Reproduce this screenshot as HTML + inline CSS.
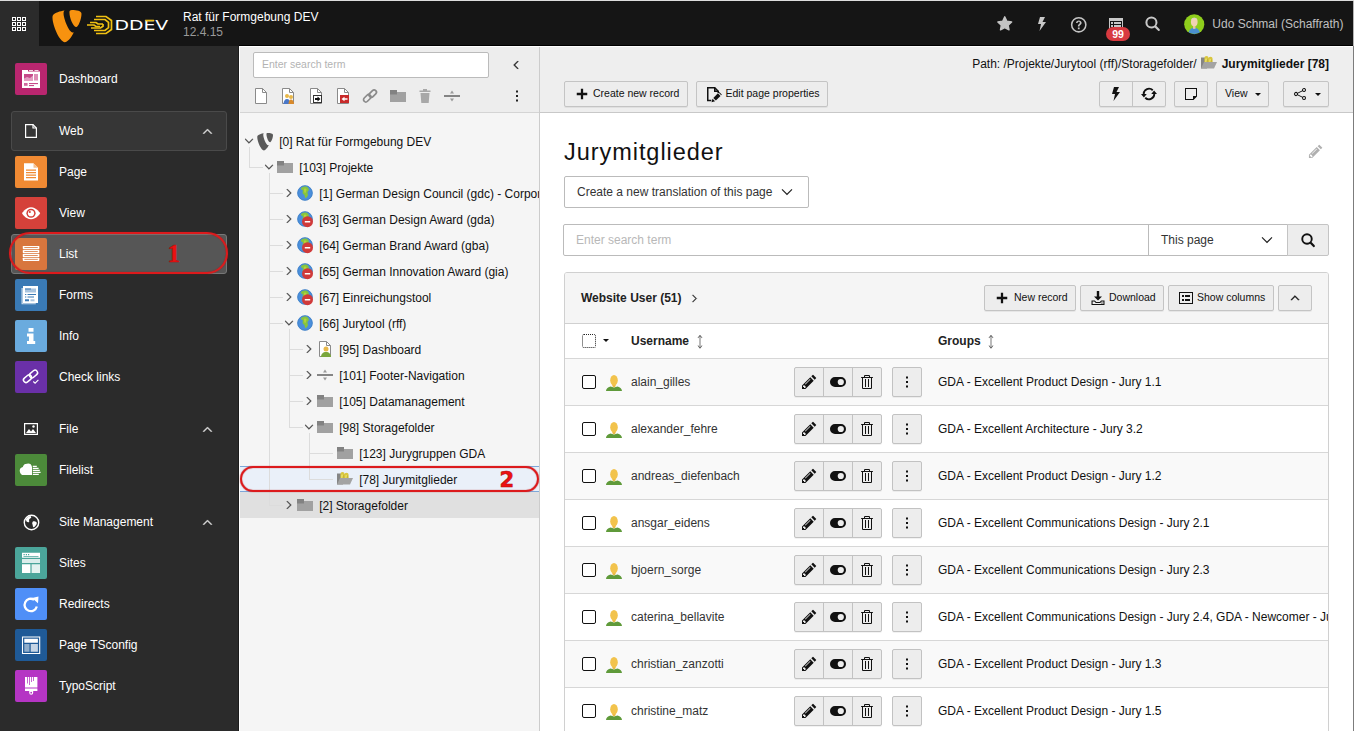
<!DOCTYPE html>
<html lang="en"><head><meta charset="utf-8"><title>List · Jurymitglieder</title>
<style>
*{box-sizing:border-box;margin:0;padding:0}
html,body{width:1354px;height:731px;overflow:hidden;background:#fff}
body{font-family:"Liberation Sans",Arial,sans-serif;font-size:12px;color:#1a1a1a;position:relative}
.abs{position:absolute}
svg{display:block;overflow:visible}
#topline{left:0;top:0;width:1354px;height:1px;background:#dcdcdc}
#topbar{left:0;top:1px;width:1353px;height:45px;background:#151515;color:#fff}
#blackline{left:239px;top:45px;width:1114px;height:1px;background:#000;z-index:5}
#gridbtn{left:0;top:0;width:39px;height:45px;background:#2b2b2b}
#rightline{left:1353px;top:1px;width:1px;height:730px;background:linear-gradient(#b4b4b4 0,#b4b4b4 45px,#7c7c7c 45px)}
#side{left:0;top:46px;width:239px;height:685px;background:#2b2b2b;color:#fff}
.modic{position:absolute;left:15px;width:32px;height:32px;border-radius:2px;overflow:hidden}
.mlabel{position:absolute;left:59px;font-size:12px;line-height:16px;color:#fff;white-space:nowrap}
.ghead{position:absolute;left:11px;width:216px;height:40px;border-radius:3px}
.ghead .gi{position:absolute;left:12px;top:12px;color:#fff}
.ghead .gc{position:absolute;left:188px;top:12px;color:#ddd}
#treeline{left:238px;top:46px;width:1px;height:685px;background:#1c1c1c}
#whiteline{left:239px;top:46px;width:1114px;height:1px;background:#fff;z-index:5}
#tree{left:239px;top:46px;width:301px;height:685px;background:#f5f5f5;border-left:1px solid #fff;border-right:1px solid #ccc}
#treetb{left:0;top:0;width:299px;height:67px;background:#ededed;border-bottom:1px solid #d4d4d4}
.node{position:absolute;left:0;width:299px;height:26px;line-height:26px;white-space:nowrap;overflow:hidden;font-size:12px;color:#111}
.node .tic{position:absolute;top:4.500px}
.node .chev{position:absolute;top:6.500px;color:#444}
.node .lbl{position:absolute;top:0}
.tl{position:absolute;background:#dcdcdc}
#doc{left:540px;top:46px;width:813px;height:67px;background:#eee;border-bottom:1px solid #c8c8c8}
.btn{position:absolute;height:26px;border:1px solid #c4c4c4;border-radius:2px;background:#ededed;font-size:10.500px;line-height:22px;color:#111;white-space:nowrap;box-shadow:0 1px 0 rgba(0,0,0,.06)}
.btn .ic{position:absolute}
.btn span{position:absolute;top:0}
#main{left:540px;top:113px;width:813px;height:618px;background:#fff}
h1{position:absolute;font-family:"Liberation Sans",sans-serif;font-weight:normal;color:#111;white-space:nowrap;letter-spacing:.95px}
.rowbtn{position:absolute;top:8px;height:30px;border:1px solid #c2c2c2;background:#ededed;border-radius:2px;box-shadow:0 1px 0 rgba(0,0,0,.05)}
.trow{position:absolute;left:1px;width:763px;height:47px;border-top:1px solid #d7d7d7}
.trow .cb{position:absolute;left:17px;top:16px;width:14px;height:14px;border:1.300px solid #111;border-radius:2px;background:#fff}
.trow .usr{position:absolute;left:41px;top:15.500px}
.trow .un{position:absolute;left:66px;top:0;line-height:46px;color:#333}
.trow .gr{position:absolute;left:373px;top:0;line-height:46px;color:#111;white-space:nowrap;width:390px;overflow:hidden}
.seg{position:absolute;top:0;width:29px;height:28px}
.seg .ic{position:absolute;left:6px;top:6px}
.anno{position:absolute;border:2.300px solid #dc1a1c;box-shadow:0 0 1px #b01010,inset 0 0 1px #b01010}
.annonum{position:absolute;font-family:"Liberation Serif","DejaVu Serif",serif;font-weight:bold;color:#ee1111;-webkit-text-stroke:.6px #b00d0d}
</style></head><body>

<div id="topline" class="abs"></div>
<div id="topbar" class="abs">
<div id="gridbtn" class="abs"><div class="abs" style="left:12px;top:16px"><svg width="14" height="14" viewBox="0 0 14 14" fill="none" stroke="#fff" stroke-width="1.200" shape-rendering="crispEdges"><path d="M.6.6h3v3h-3zM5.600.6h3v3h-3zM10.600.6h3v3h-3zM.6 5.600h3v3h-3zM5.600 5.600h3v3h-3zM10.600 5.600h3v3h-3zM.6 10.600h3v3h-3zM5.600 10.600h3v3h-3zM10.600 10.600h3v3h-3z"/></svg></div></div>
<div class="abs" style="left:51.500px;top:8.500px"><svg width="29.500" height="29.500" viewBox="2.200 2.100 12 10.900" preserveAspectRatio="none"><path fill="#f7920f" d="M11.100 10.300c-.200 0-.300.100-.500.100-1.500 0-3.700-5.200-3.700-7 0-.700.200-.900.400-1.100-1.800.200-4 .900-4.700 1.700-.200.200-.200.600-.200 1 0 2.800 2.900 9 5 9 1 0 2.600-1.600 3.700-3.700M10.300 2.100c1.900 0 3.900.300 3.900 1.400 0 2.200-1.400 4.900-2.100 4.900-1.300 0-2.800-3.500-2.800-5.300-.100-.700.200-1 1-1"/></svg></div>
<div class="abs" style="left:86px;top:14px"><svg width="90" height="20" viewBox="0 0 90 20" style="overflow:visible">
<g fill="none" stroke="#f0c012" stroke-width="1.700" stroke-linejoin="miter">
<path d="M10 1.500h10l5.500 4v9l-5.500 4H10"/><path d="M8 4.500h11l3.500 2.800v5.400L19 15.500H8"/><path d="M4 7.500h6l2 1.500h5"/><path d="M1 10h7l2 1.500h4"/><path d="M5 13h9.500l2.500-1.700V9"/></g>
<text transform="translate(28.400 14.800) scale(1.375 1)" font-family="'DejaVu Sans','Liberation Sans',sans-serif" font-size="13.700" fill="#fff">DDEV</text><rect x="59.200" y="4.700" width="8.700" height="1.600" fill="#f2c215"/>
</svg></div>
<div class="abs" style="left:183px;top:9px;font-size:12px;line-height:15px;color:#fff;white-space:nowrap">Rat für Formgebung DEV<br><span style="color:#9a9a9a">12.4.15</span></div>
<div class="abs" style="left:996px;top:14px;color:#c4c4c4"><svg class="ic" width="17.5" height="17.5" viewBox="0 0 16 16" fill="currentColor" ><path stroke="currentColor" stroke-width="1.300" stroke-linejoin="round" d="m8 1.700 1.900 4 4.400.6-3.200 3 .8 4.300L8 11.500l-3.900 2.100.8-4.300-3.200-3 4.400-.6z"/></svg></div>
<div class="abs" style="left:1034px;top:15px;color:#c8c8c8"><svg class="ic" width="16" height="16" viewBox="0 0 16 16" fill="currentColor" ><path d="M11 1H6L4 8h3l-1.500 7L12 6H8.500z"/></svg></div>
<div class="abs" style="left:1070px;top:14.500px;color:#c4c4c4"><svg class="ic" width="17.5" height="17.5" viewBox="0 0 16 16" fill="currentColor" ><path d="M8 .8a7.200 7.200 0 1 0 7.200 7.200A7.200 7.200 0 0 0 8 .8zm0 13a5.800 5.800 0 1 1 5.800-5.800A5.800 5.800 0 0 1 8 13.800z"/><path d="M8 4C6.600 4 5.500 4.900 5.500 6.300H7c0-.6.400-1 1-1s1 .4 1 .9c0 .4-.2.700-.7 1.100-.8.600-1.100 1.100-1.100 2v.3h1.500v-.2c0-.5.200-.8.700-1.200.8-.6 1.200-1.200 1.200-2.100C10.600 4.900 9.500 4 8 4zM7.200 10.500h1.600V12H7.200z"/></svg></div>
<div class="abs" style="left:1108px;top:15px;color:#c8c8c8"><svg class="ic" width="16" height="16" viewBox="0 0 16 16" fill="currentColor" ><path d="M1 2v12h14V2H1zm13 11H2V5h12v8z"/><path d="M3 6h2v2H3zM3 9h2v2H3zM6 6h7v2H6zM6 9h7v2H6z"/></svg></div>
<div class="abs" style="left:1106px;top:25.500px;width:24px;height:14.500px;border-radius:7.500px;background:#d83a40;color:#fff;font-size:10.500px;font-weight:bold;line-height:15px;text-align:center">99</div>
<div class="abs" style="left:1144px;top:14px;color:#c8c8c8"><svg class="ic" width="17" height="17" viewBox="0 0 16 16" fill="currentColor" ><path d="M14.700 13.300l-3.200-3.200A5.700 5.700 0 0 0 12.700 7a5.700 5.700 0 1 0-5.700 5.700 5.700 5.700 0 0 0 3.100-1l3.200 3.200a1 1 0 0 0 1.400-1.400zM3.200 7a3.800 3.800 0 1 1 3.800 3.800A3.800 3.800 0 0 1 3.200 7z"/></svg></div>
<div class="abs" style="left:1183.800px;top:12.700px"><svg width="20.500" height="20.500" viewBox="0 0 22 22"><defs><clipPath id="av"><circle cx="11" cy="11" r="10.500"/></clipPath></defs><circle cx="11" cy="11" r="10.800" fill="#8fce1c"/><g clip-path="url(#av)"><ellipse cx="11" cy="21.500" rx="6.300" ry="7" fill="#4a8fd0"/><rect x="9.700" y="12" width="2.600" height="4" fill="#e7c4a3"/><ellipse cx="11" cy="8.500" rx="3.600" ry="4.600" fill="#f1d3b5"/><path d="M7.500 7.500c0-2 1-3.500 3.500-3.500s3.500 1.500 3.500 3.500c-.5-1.500-1.500-2.300-3.500-2.300S8 6 7.500 7.500z" fill="#d9d2c4"/></g></svg></div>
<div class="abs" style="left:1212.300px;top:16px;font-size:12px;line-height:15px;color:#c0c0c0;white-space:nowrap">Udo Schmal (Schaffrath)</div>
</div>
<div id="rightline" class="abs"></div>
<div id="side" class="abs">
<div><span class="modic" style="top:17px;background:#b9266f"><svg width="32" height="32" viewBox="0 0 32 32"><path fill="#fff" d="M7 7h6v1.500h12V25H7z"/><path fill="#fff" opacity=".8" d="M14 7h4v1h-4zM19.500 7h4v1h-4z"/><rect x="9" y="11" width="9" height="6.500" fill="#c64a8a"/><path fill="#e39cc2" d="M9 15.500l3-1.500 3 1 3-2.500v5H9z"/><rect x="19" y="11" width="4" height="6.500" fill="#dd8cb6"/><rect x="9" y="20" width="3.600" height="2.800" fill="#cf6aa0"/><rect x="14" y="20" width="9" height="1.100" fill="#c64a8a"/><rect x="14" y="22" width="5" height="1.100" fill="#c64a8a"/></svg></span><span class="mlabel" style="top:25px">Dashboard</span></div>
<div class="ghead" style="top:65px;background:#363636;border:1px solid #4a4a4a;"><span class="gi" style="left:11px;top:11px"><svg width="16" height="16" viewBox="0 0 16 16" fill="none" stroke="#fff" stroke-width="1.200"><path d="M2.600 1.600h7.400l3.400 3.400v9.400H2.600z"/><path d="M10 1.600v3.400h3.400"/></svg></span><span class="mlabel" style="left:47px;top:11px">Web</span><span class="gc" style="left:188.500px;top:12.500px"><svg class="ic" width="13" height="13" viewBox="0 0 16 16" fill="currentColor" stroke="currentColor" stroke-width=".6"><path d="M8 4.800 13.400 10.200l-.8.8L8 6.400 3.400 11l-.8-.8z"/></svg></span></div>
<div><span class="modic" style="top:110px;background:#f08a33"><svg width="32" height="32" viewBox="0 0 32 32"><path fill="#fff" d="M9 7.300h9.500L23 11.800v12.800H9z"/><path fill="#f6c08f" d="M18.500 7.300v4.500H23z"/><path fill="#f08a33" d="M11 13.500h10v1.200H11zM11 16h10v1.200H11zM11 18.500h10v1.200H11zM11 21h10v1.200H11z"/></svg></span><span class="mlabel" style="top:118px">Page</span></div>
<div><span class="modic" style="top:151px;background:#d5413a"><svg width="32" height="32" viewBox="0 0 32 32"><path fill="#fff" d="M16 10.200c-5.500 0-9 6.050-9 6.050s3.500 6.050 9 6.050 9.200-6.050 9.200-6.050-3.700-6.050-9.200-6.050z"/><circle cx="16" cy="16.250" r="4.600" fill="#d5413a"/><circle cx="16" cy="16.250" r="3.100" fill="#fff"/><circle cx="14.800" cy="15" r="1.100" fill="#d5413a"/></svg></span><span class="mlabel" style="top:159px">View</span></div>
<div class="abs" style="left:11px;top:188px;width:216px;height:40px;background:#565656;border:1px solid #777;border-radius:3px"></div>
<div><span class="modic" style="top:192px;background:#d8763e"><svg width="32" height="32" viewBox="0 0 32 32"><rect x="7.800" y="8" width="16.500" height="3.200" rx=".6" fill="#fff"/><rect x="9.300" y="9.2" width="13.500" height=".800" fill="#d8763e"/><rect x="7.800" y="11.9" width="16.500" height="3.200" rx=".6" fill="#fff"/><rect x="9.300" y="13.1" width="13.500" height=".800" fill="#d8763e"/><rect x="7.800" y="15.8" width="16.500" height="3.200" rx=".6" fill="#fff"/><rect x="9.300" y="17.0" width="13.500" height=".800" fill="#d8763e"/><rect x="7.800" y="19.7" width="16.500" height="3.200" rx=".6" fill="#fff"/><rect x="9.300" y="20.9" width="13.500" height=".800" fill="#d8763e"/></svg></span><span class="mlabel" style="top:200px">List</span></div>
<div><span class="modic" style="top:233px;background:#3a7ab5"><svg width="32" height="32" viewBox="0 0 32 32"><path fill="#fff" opacity=".75" d="M6.500 9h1.300v15.300h13v1H6.500z"/><path fill="#fff" d="M8 7h15v17H8z"/><rect x="10" y="9.500" width="11" height="4" fill="#a9c4de"/><rect x="10" y="9.500" width="6" height="1" fill="#3a7ab5"/><path fill="#3a7ab5" d="M10 15h1.300v1.100H10zM12.500 15h8.500v1.100h-8.500zM10 17.500h1.300v1.100H10zM12.500 17.500h6.500v1.100h-6.500zM10 20.300h4v2h-4z"/><rect x="15.500" y="20.300" width="4" height="2" fill="#a9c4de"/></svg></span><span class="mlabel" style="top:241px">Forms</span></div>
<div><span class="modic" style="top:274px;background:#6aabde"><svg width="32" height="32" viewBox="0 0 32 32"><path fill="#fff" d="M13.500 8h5v3.800h-5zM12 13.500h6.500v7.500h1.700v3H12v-3h2v-4.500h-2z"/></svg></span><span class="mlabel" style="top:282px">Info</span></div>
<div><span class="modic" style="top:315px;background:#6a30a8"><svg width="32" height="32" viewBox="0 0 32 32"><g fill="none" stroke="#fff" stroke-width="1.500"><rect x="8" y="15.200" width="9" height="5" rx="2.500" transform="rotate(-40 12.500 17.700)"/><rect x="14" y="10.500" width="9" height="5" rx="2.500" transform="rotate(-40 18.500 13)"/></g><path d="m18.300 20.500 1.800 1.700 3.300-3.300" fill="none" stroke="#fff" stroke-width="1.100"/></svg></span><span class="mlabel" style="top:323px">Check links</span></div>
<div class="ghead" style="top:363px;"><span class="gi" style=""><svg width="16" height="16" viewBox="0 0 16 16"><path fill="none" stroke="#fff" stroke-width="1.200" d="M1.600 2.600h12.800v10.800H1.600z"/><path fill="#fff" d="M3 12l3-4 2 2.500L10 8l3 4z"/><circle cx="10.500" cy="5.500" r="1.200" fill="#fff"/></svg></span><span class="mlabel" style="left:48px;top:12px">File</span><span class="gc" style="left:189.500px;top:13.500px"><svg class="ic" width="13" height="13" viewBox="0 0 16 16" fill="currentColor" stroke="currentColor" stroke-width=".6"><path d="M8 4.800 13.400 10.200l-.8.8L8 6.400 3.400 11l-.8-.8z"/></svg></span></div>
<div><span class="modic" style="top:408px;background:#4c8a3a"><svg width="32" height="32" viewBox="0 0 32 32"><path fill="#fff" d="M12 9.700a4.300 4.300 0 0 0-4.200 3.400A3.900 3.900 0 0 0 9.800 20.900H17V13a4.300 4.300 0 0 0-5-3.300z"/><path fill="#fff" d="M17.800 11.800h4v1.100h-4zM17.800 13.800h5.800v1.100h-5.800zM17.800 15.800h7v1.100h-7zM17.800 17.800h7.800v1.100h-7.800zM17.800 19.800h6v1.100h-6z"/></svg></span><span class="mlabel" style="top:416px">Filelist</span></div>
<div class="ghead" style="top:456px;"><span class="gi" style=""><svg width="17" height="17" viewBox="0 0 16 16"><circle cx="8" cy="8" r="6.800" fill="none" stroke="#fff" stroke-width="1.300"/><path fill="#fff" d="M3 4.500c1-1.500 2.500-2.500 4-2.700.8.500 1 1.200.5 2-.5.600-1.300.500-1.700 1.300s.4 1.400 0 2.200-1.700.400-2.200 0S2.500 5.500 3 4.500zM9.300 7c1-.4 2.300-.2 3.200.5s.4 2.200-.4 3.100-1.400 2.300-2.300 1.800-.4-1.800-.900-2.700 0-2.300.400-2.700z"/></svg></span><span class="mlabel" style="left:48px;top:12px">Site Management</span><span class="gc" style="left:189.500px;top:13.500px"><svg class="ic" width="13" height="13" viewBox="0 0 16 16" fill="currentColor" stroke="currentColor" stroke-width=".6"><path d="M8 4.800 13.400 10.200l-.8.8L8 6.400 3.400 11l-.8-.8z"/></svg></span></div>
<div><span class="modic" style="top:501px;background:#4ba59a"><svg width="32" height="32" viewBox="0 0 32 32"><path fill="#fff" d="M7 5.800h18v5H7z"/><path fill="#4ba59a" d="M8.500 7h1.200v1.200H8.500zM10.800 7H12v1.200h-1.200zM13 7h1.200v1.200H13zM8.500 9.200h15v.7h-15z"/><path fill="#fff" opacity=".8" d="M7 12h18v4H7z"/><path fill="#fff" d="M7 17.200h8.400V26H7z"/><path fill="#fff" opacity=".85" d="M16.600 17.200H25V26h-8.400z"/></svg></span><span class="mlabel" style="top:509px">Sites</span></div>
<div><span class="modic" style="top:542px;background:#4f8ff7"><svg width="32" height="32" viewBox="0 0 32 32"><path fill="none" stroke="#fff" stroke-width="2.300" d="M21.800 18.500a6.200 6.200 0 1 1-2.700-6.800"/><path fill="#fff" d="M17 10l6.500-1.500-.5 6.800z"/></svg></span><span class="mlabel" style="top:550px">Redirects</span></div>
<div><span class="modic" style="top:583px;background:#1f5a97"><svg width="32" height="32" viewBox="0 0 32 32"><path fill="none" stroke="#fff" stroke-width="1.100" d="M7.500 8h17.200v16.500H7.500z"/><path fill="#fff" d="M9.300 9.800h13.600v4H9.300z"/><path fill="#fff" opacity=".5" d="M9.300 15h5.200v7.700H9.300z"/><path fill="#fff" opacity=".75" d="M15.700 15h7.200v7.700h-7.200z"/></svg></span><span class="mlabel" style="top:591px">Page TSconfig</span></div>
<div><span class="modic" style="top:624px;background:#b535c4"><svg width="32" height="32" viewBox="0 0 32 32"><path fill="#fff" d="M10 7h12.400v10.500H10z"/><path fill="#b535c4" d="M12 7h1v6.500h-1zM14 7h1v8h-1zM16 7h1v5h-1zM18 7h1v4h-1z" opacity=".75"/><path fill="#fff" d="M10 18.500h12.400v2.500h-4.200v1.700a2 2 0 1 1-4 0V21H10z"/><circle cx="16.200" cy="22.700" r=".9" fill="#b535c4"/></svg></span><span class="mlabel" style="top:632px">TypoScript</span></div>
<div class="anno" style="left:9px;top:186px;width:219px;height:42px;border-radius:21px"></div>
<div class="annonum" style="left:167.500px;top:194px;font-size:25px;line-height:28px">1</div>
</div>
<div id="treeline" class="abs"></div><div id="whiteline" class="abs"></div><div id="blackline" class="abs"></div>
<div id="tree" class="abs">
<div id="treetb" class="abs">
<div class="abs" style="left:13px;top:6px;width:236px;height:26px;border:1px solid #bbb;border-radius:2px;background:#fff;font-size:10.500px;line-height:23px;padding-left:8px;color:#b3b3b3">Enter search term</div>
<div class="abs" style="left:270px;top:13px;color:#222"><svg class="ic" width="12" height="12" viewBox="0 0 16 16" fill="currentColor" stroke="currentColor" stroke-width=".7"><path d="M4.800 8 10.200 2.600l.8.8L6.400 8 11 12.600l-.8.8z"/></svg></div>
<div class="abs" style="left:13.0px;top:42px"><svg width="16" height="16" viewBox="0 0 16 16"><path fill="#fff" stroke="#8a8a8a" d="M2.500 .500h7l4 4v11h-11z"/><path fill="none" stroke="#8a8a8a" d="M9.500 .500v4h4"/></svg></div>
<div class="abs" style="left:40.3px;top:42px"><svg width="16" height="16" viewBox="0 0 16 16"><path fill="#fff" stroke="#8a8a8a" d="M2.500 .500h7l4 4v11h-11z"/><path fill="none" stroke="#8a8a8a" d="M9.500 .500v4h4"/><circle cx="7" cy="8" r="2" fill="#e8b84a"/><circle cx="11" cy="9" r="2" fill="#e8b84a"/><path fill="#4a78c8" d="M3.500 16c0-3 1.500-5 3.500-5s3.500 2 3.500 5z"/><path fill="#d98a2b" d="M8.500 16c0-2.500 1-4.500 2.500-4.500s3 2 3 4.500z"/></svg></div>
<div class="abs" style="left:67.6px;top:42px"><svg width="16" height="16" viewBox="0 0 16 16"><path fill="#fff" stroke="#8a8a8a" d="M2.500 .500h7l4 4v11h-11z"/><path fill="none" stroke="#8a8a8a" d="M9.500 .500v4h4"/><rect x="5.500" y="7.500" width="8" height="7" fill="#fff" stroke="#333"/><path fill="#111" d="M7 12h2.500v1.500L12.500 11 9.500 8.500V10H7z"/></svg></div>
<div class="abs" style="left:94.9px;top:42px"><svg width="16" height="16" viewBox="0 0 16 16"><path fill="#fff" stroke="#8a8a8a" d="M2.500 .500h7l4 4v11h-11z"/><path fill="none" stroke="#8a8a8a" d="M9.500 .500v4h4"/><rect x="5" y="7" width="9" height="8" fill="#c82a2a"/><path fill="#fff" d="M12.500 10.300H9.500V8.800L6.500 11l3 2.200v-1.500h3z"/></svg></div>
<div class="abs" style="left:122.2px;top:42px"><svg width="16" height="16" viewBox="0 0 16 16" fill="none" stroke="#8a8a8a" stroke-width="1.700"><rect x="1" y="8" width="8.500" height="4.600" rx="2.300" transform="rotate(-45 5.200 10.300)"/><rect x="6.500" y="3.400" width="8.500" height="4.600" rx="2.300" transform="rotate(-45 10.700 5.700)"/></svg></div>
<div class="abs" style="left:149.5px;top:42px"><svg width="16" height="16" viewBox="0 0 16 16"><path fill="#a1a1a1" d="M0 4h16v10H0z"/><path fill="#828282" d="M0 2h7v4.500H0z"/></svg></div>
<div class="abs" style="left:176.8px;top:42px"><svg width="16" height="16" viewBox="0 0 16 16" fill="#a8a8a8"><path d="M6 1h4v1.500h3.500V4h-11V2.500H6zM3.500 5h9l-.8 10H4.300z"/></svg></div>
<div class="abs" style="left:204.1px;top:42px"><svg width="16" height="16" viewBox="0 0 16 16"><path fill="#555" d="M0 7.300h16v1.400H0z"/><path fill="#9a9a9a" d="M8 2.500 10 5.500H6zM8 13.500 6 10.500h4z"/></svg></div>
<div class="abs" style="left:269px;top:42px;color:#222"><svg class="ic" width="16" height="16" viewBox="0 0 16 16" fill="currentColor" ><path d="M7 2.400h2v2H7zM7 7h2v2H7zM7 11.600h2v2H7z"/></svg></div>
</div>
<div class="abs" style="left:0;top:420px;width:299px;height:26px;background:#eaf0f9;border-top:1px solid #7da7d9;border-bottom:1px solid #7da7d9"></div>
<div class="abs" style="left:0;top:446px;width:299px;height:26px;background:#e0e0e0"></div>
<div class="tl" style="left:9px;top:99px;width:1px;height:23px"></div>
<div class="tl" style="left:9px;top:121px;width:16px;height:1px"></div>
<div class="tl" style="left:29px;top:125px;width:1px;height:335px"></div>
<div class="tl" style="left:29px;top:147px;width:17px;height:1px"></div>
<div class="tl" style="left:29px;top:173px;width:17px;height:1px"></div>
<div class="tl" style="left:29px;top:199px;width:17px;height:1px"></div>
<div class="tl" style="left:29px;top:225px;width:17px;height:1px"></div>
<div class="tl" style="left:29px;top:251px;width:17px;height:1px"></div>
<div class="tl" style="left:29px;top:277px;width:17px;height:1px"></div>
<div class="tl" style="left:29px;top:459px;width:17px;height:1px"></div>
<div class="tl" style="left:49px;top:281px;width:1px;height:101px"></div>
<div class="tl" style="left:49px;top:303px;width:17px;height:1px"></div>
<div class="tl" style="left:49px;top:329px;width:17px;height:1px"></div>
<div class="tl" style="left:49px;top:355px;width:17px;height:1px"></div>
<div class="tl" style="left:49px;top:381px;width:17px;height:1px"></div>
<div class="tl" style="left:69px;top:385px;width:1px;height:49px"></div>
<div class="tl" style="left:69px;top:407px;width:24px;height:1px"></div>
<div class="tl" style="left:69px;top:433px;width:24px;height:1px"></div>
<div class="node" style="top:82.5px"><span class="chev" style="left:3.3px"><span style="display:block;background:#f5f5f5"><svg class="ic" width="12" height="12" viewBox="0 0 16 16" fill="currentColor" stroke="currentColor" stroke-width=".5"><path d="M8 11.200 2.600 5.800l.8-.8L8 9.600 12.600 5l.8.8z"/></svg></span></span><svg class="tic" style="left:17px" width="16" height="16" viewBox="2.200 2.100 12 10.900" preserveAspectRatio="none"><path fill="#5a5a5a" d="M11.100 10.300c-.200 0-.300.100-.500.100-1.500 0-3.700-5.200-3.700-7 0-.700.200-.900.400-1.100-1.800.200-4 .900-4.700 1.700-.200.200-.200.600-.200 1 0 2.800 2.900 9 5 9 1 0 2.600-1.600 3.700-3.700M10.300 2.100c1.900 0 3.900.300 3.900 1.400 0 2.200-1.400 4.900-2.100 4.900-1.300 0-2.800-3.500-2.800-5.300-.100-.700.200-1 1-1"/></svg><span class="lbl" style="left:39.2px">[0] Rat für Formgebung DEV</span></div>
<div class="node" style="top:108.5px"><span class="chev" style="left:23.3px"><span style="display:block;background:#f5f5f5"><svg class="ic" width="12" height="12" viewBox="0 0 16 16" fill="currentColor" stroke="currentColor" stroke-width=".5"><path d="M8 11.200 2.600 5.800l.8-.8L8 9.600 12.600 5l.8.8z"/></svg></span></span><svg class="tic" style="left:37px" width="16" height="16" viewBox="0 0 16 16"><path fill="#a1a1a1" d="M0 4h16v10H0z"/><path fill="#828282" d="M0 2h7v4.500H0z"/></svg><span class="lbl" style="left:59.2px">[103] Projekte</span></div>
<div class="node" style="top:134.5px"><span class="chev" style="left:43.3px"><span style="display:block;background:#f5f5f5"><svg class="ic" width="12" height="12" viewBox="0 0 16 16" fill="currentColor" stroke="currentColor" stroke-width=".5"><path d="M11.200 8 5.800 13.400l-.8-.8L9.600 8 5 3.400l.8-.8z"/></svg></span></span><svg class="tic" style="left:57px" width="16" height="16" viewBox="0 0 16 16"><circle cx="8" cy="8" r="7.600" fill="#4a8fdc"/><circle cx="8" cy="8" r="7.300" fill="none" stroke="#3f7fc4" stroke-width=".8"/><path fill="#86c440" d="M5 2.200c1.500-.9 3.500-1 5-.4 1.200.8 2 2 1.800 3.300-.3 1.200-1.300 1.400-1.300 2.600 0 1.100.9 1.700.4 2.900-.5 1.100-1.400 2.600-2.300 2.400-.9-.2-.7-1.600-1.100-2.700S5.800 9 5.600 7.900s.6-1.600.2-2.400S4.200 4.800 4 4s.3-1.300 1-1.800z"/><path fill="#c9d83a" d="M7.500 3.500c.8-.3 1.800.1 2 .9s-.5 1.300-.6 2-.1 1.500-.7 1.500-.9-.8-1-1.500.1-1.100-.2-1.700.0-1 .5-1.200z" opacity=".7"/></svg><span class="lbl" style="left:79.2px">[1] German Design Council (gdc) - Corporate</span></div>
<div class="node" style="top:160.5px"><span class="chev" style="left:43.3px"><span style="display:block;background:#f5f5f5"><svg class="ic" width="12" height="12" viewBox="0 0 16 16" fill="currentColor" stroke="currentColor" stroke-width=".5"><path d="M11.200 8 5.800 13.400l-.8-.8L9.600 8 5 3.400l.8-.8z"/></svg></span></span><svg class="tic" style="left:57px" width="16" height="16" viewBox="0 0 16 16"><circle cx="8" cy="8" r="7.600" fill="#4a8fdc"/><circle cx="8" cy="8" r="7.300" fill="none" stroke="#3f7fc4" stroke-width=".8"/><path fill="#86c440" d="M5 2.200c1.500-.9 3.500-1 5-.4 1.200.8 2 2 1.800 3.300-.3 1.200-1.300 1.400-1.300 2.600 0 1.100.9 1.700.4 2.900-.5 1.100-1.400 2.600-2.300 2.400-.9-.2-.7-1.600-1.100-2.700S5.800 9 5.600 7.900s.6-1.600.2-2.400S4.200 4.800 4 4s.3-1.300 1-1.800z"/><path fill="#c9d83a" d="M7.500 3.500c.8-.3 1.800.1 2 .9s-.5 1.300-.6 2-.1 1.500-.7 1.500-.9-.8-1-1.500.1-1.100-.2-1.700.0-1 .5-1.200z" opacity=".7"/><circle cx="10.500" cy="10.700" r="5.500" fill="#d03a3a"/><rect x="7.800" y="10" width="5.400" height="1.500" fill="#fff"/></svg><span class="lbl" style="left:79.2px">[63] German Design Award (gda)</span></div>
<div class="node" style="top:186.5px"><span class="chev" style="left:43.3px"><span style="display:block;background:#f5f5f5"><svg class="ic" width="12" height="12" viewBox="0 0 16 16" fill="currentColor" stroke="currentColor" stroke-width=".5"><path d="M11.200 8 5.800 13.400l-.8-.8L9.600 8 5 3.400l.8-.8z"/></svg></span></span><svg class="tic" style="left:57px" width="16" height="16" viewBox="0 0 16 16"><circle cx="8" cy="8" r="7.600" fill="#4a8fdc"/><circle cx="8" cy="8" r="7.300" fill="none" stroke="#3f7fc4" stroke-width=".8"/><path fill="#86c440" d="M5 2.200c1.500-.9 3.500-1 5-.4 1.200.8 2 2 1.800 3.300-.3 1.200-1.300 1.400-1.300 2.600 0 1.100.9 1.700.4 2.900-.5 1.100-1.400 2.600-2.300 2.400-.9-.2-.7-1.600-1.100-2.700S5.800 9 5.600 7.900s.6-1.600.2-2.400S4.200 4.800 4 4s.3-1.300 1-1.800z"/><path fill="#c9d83a" d="M7.500 3.500c.8-.3 1.800.1 2 .9s-.5 1.300-.6 2-.1 1.500-.7 1.500-.9-.8-1-1.500.1-1.100-.2-1.700.0-1 .5-1.200z" opacity=".7"/><circle cx="10.500" cy="10.700" r="5.500" fill="#d03a3a"/><rect x="7.800" y="10" width="5.400" height="1.500" fill="#fff"/></svg><span class="lbl" style="left:79.2px">[64] German Brand Award (gba)</span></div>
<div class="node" style="top:212.5px"><span class="chev" style="left:43.3px"><span style="display:block;background:#f5f5f5"><svg class="ic" width="12" height="12" viewBox="0 0 16 16" fill="currentColor" stroke="currentColor" stroke-width=".5"><path d="M11.200 8 5.800 13.400l-.8-.8L9.600 8 5 3.400l.8-.8z"/></svg></span></span><svg class="tic" style="left:57px" width="16" height="16" viewBox="0 0 16 16"><circle cx="8" cy="8" r="7.600" fill="#4a8fdc"/><circle cx="8" cy="8" r="7.300" fill="none" stroke="#3f7fc4" stroke-width=".8"/><path fill="#86c440" d="M5 2.200c1.500-.9 3.500-1 5-.4 1.200.8 2 2 1.800 3.300-.3 1.200-1.300 1.400-1.300 2.600 0 1.100.9 1.700.4 2.900-.5 1.100-1.400 2.600-2.300 2.400-.9-.2-.7-1.600-1.100-2.700S5.800 9 5.600 7.900s.6-1.600.2-2.400S4.200 4.800 4 4s.3-1.300 1-1.800z"/><path fill="#c9d83a" d="M7.500 3.500c.8-.3 1.800.1 2 .9s-.5 1.300-.6 2-.1 1.500-.7 1.500-.9-.8-1-1.500.1-1.100-.2-1.700.0-1 .5-1.200z" opacity=".7"/><circle cx="10.500" cy="10.700" r="5.500" fill="#d03a3a"/><rect x="7.800" y="10" width="5.400" height="1.500" fill="#fff"/></svg><span class="lbl" style="left:79.2px">[65] German Innovation Award (gia)</span></div>
<div class="node" style="top:238.5px"><span class="chev" style="left:43.3px"><span style="display:block;background:#f5f5f5"><svg class="ic" width="12" height="12" viewBox="0 0 16 16" fill="currentColor" stroke="currentColor" stroke-width=".5"><path d="M11.200 8 5.800 13.400l-.8-.8L9.600 8 5 3.400l.8-.8z"/></svg></span></span><svg class="tic" style="left:57px" width="16" height="16" viewBox="0 0 16 16"><circle cx="8" cy="8" r="7.600" fill="#4a8fdc"/><circle cx="8" cy="8" r="7.300" fill="none" stroke="#3f7fc4" stroke-width=".8"/><path fill="#86c440" d="M5 2.200c1.500-.9 3.500-1 5-.4 1.200.8 2 2 1.800 3.300-.3 1.200-1.300 1.400-1.300 2.600 0 1.100.9 1.700.4 2.900-.5 1.100-1.400 2.600-2.300 2.400-.9-.2-.7-1.600-1.100-2.700S5.800 9 5.600 7.900s.6-1.600.2-2.400S4.200 4.800 4 4s.3-1.300 1-1.800z"/><path fill="#c9d83a" d="M7.500 3.500c.8-.3 1.800.1 2 .9s-.5 1.300-.6 2-.1 1.500-.7 1.500-.9-.8-1-1.500.1-1.100-.2-1.700.0-1 .5-1.200z" opacity=".7"/><circle cx="10.500" cy="10.700" r="5.500" fill="#d03a3a"/><rect x="7.800" y="10" width="5.400" height="1.500" fill="#fff"/></svg><span class="lbl" style="left:79.2px">[67] Einreichungstool</span></div>
<div class="node" style="top:264.5px"><span class="chev" style="left:43.3px"><span style="display:block;background:#f5f5f5"><svg class="ic" width="12" height="12" viewBox="0 0 16 16" fill="currentColor" stroke="currentColor" stroke-width=".5"><path d="M8 11.200 2.600 5.800l.8-.8L8 9.600 12.600 5l.8.8z"/></svg></span></span><svg class="tic" style="left:57px" width="16" height="16" viewBox="0 0 16 16"><circle cx="8" cy="8" r="7.600" fill="#4a8fdc"/><circle cx="8" cy="8" r="7.300" fill="none" stroke="#3f7fc4" stroke-width=".8"/><path fill="#86c440" d="M5 2.200c1.500-.9 3.500-1 5-.4 1.200.8 2 2 1.800 3.300-.3 1.200-1.300 1.400-1.300 2.600 0 1.100.9 1.700.4 2.900-.5 1.100-1.400 2.600-2.300 2.400-.9-.2-.7-1.600-1.100-2.700S5.800 9 5.600 7.900s.6-1.600.2-2.400S4.200 4.800 4 4s.3-1.300 1-1.800z"/><path fill="#c9d83a" d="M7.500 3.500c.8-.3 1.800.1 2 .9s-.5 1.300-.6 2-.1 1.500-.7 1.500-.9-.8-1-1.500.1-1.100-.2-1.700.0-1 .5-1.200z" opacity=".7"/></svg><span class="lbl" style="left:79.2px">[66] Jurytool (rff)</span></div>
<div class="node" style="top:290.5px"><span class="chev" style="left:63.3px"><span style="display:block;background:#f5f5f5"><svg class="ic" width="12" height="12" viewBox="0 0 16 16" fill="currentColor" stroke="currentColor" stroke-width=".5"><path d="M11.200 8 5.800 13.400l-.8-.8L9.600 8 5 3.400l.8-.8z"/></svg></span></span><svg class="tic" style="left:77px" width="16" height="16" viewBox="0 0 16 16"><path fill="#fff" stroke="#8a8a8a" d="M2.500 .500h7l4 4v11h-11z"/><path fill="none" stroke="#8a8a8a" d="M9.500 .500v4h4"/><circle cx="9" cy="8" r="2.500" fill="#e8b84a"/><path fill="#7aa63c" d="M4 16c0-3 2-5 5-5s5 2 5 5z"/></svg><span class="lbl" style="left:99.2px">[95] Dashboard</span></div>
<div class="node" style="top:316.5px"><span class="chev" style="left:63.3px"><span style="display:block;background:#f5f5f5"><svg class="ic" width="12" height="12" viewBox="0 0 16 16" fill="currentColor" stroke="currentColor" stroke-width=".5"><path d="M11.200 8 5.800 13.400l-.8-.8L9.600 8 5 3.400l.8-.8z"/></svg></span></span><svg class="tic" style="left:77px" width="16" height="16" viewBox="0 0 16 16"><path fill="#555" d="M0 7.300h16v1.400H0z"/><path fill="#9a9a9a" d="M8 2.500 10 5.500H6zM8 13.500 6 10.500h4z"/></svg><span class="lbl" style="left:99.2px">[101] Footer-Navigation</span></div>
<div class="node" style="top:342.5px"><span class="chev" style="left:63.3px"><span style="display:block;background:#f5f5f5"><svg class="ic" width="12" height="12" viewBox="0 0 16 16" fill="currentColor" stroke="currentColor" stroke-width=".5"><path d="M11.200 8 5.800 13.400l-.8-.8L9.600 8 5 3.400l.8-.8z"/></svg></span></span><svg class="tic" style="left:77px" width="16" height="16" viewBox="0 0 16 16"><path fill="#a1a1a1" d="M0 4h16v10H0z"/><path fill="#828282" d="M0 2h7v4.500H0z"/></svg><span class="lbl" style="left:99.2px">[105] Datamanagement</span></div>
<div class="node" style="top:368.5px"><span class="chev" style="left:63.3px"><span style="display:block;background:#f5f5f5"><svg class="ic" width="12" height="12" viewBox="0 0 16 16" fill="currentColor" stroke="currentColor" stroke-width=".5"><path d="M8 11.200 2.600 5.800l.8-.8L8 9.600 12.600 5l.8.8z"/></svg></span></span><svg class="tic" style="left:77px" width="16" height="16" viewBox="0 0 16 16"><path fill="#a1a1a1" d="M0 4h16v10H0z"/><path fill="#828282" d="M0 2h7v4.500H0z"/></svg><span class="lbl" style="left:99.2px">[98] Storagefolder</span></div>
<div class="node" style="top:394.5px"><svg class="tic" style="left:97px" width="16" height="16" viewBox="0 0 16 16"><path fill="#a1a1a1" d="M0 4h16v10H0z"/><path fill="#828282" d="M0 2h7v4.500H0z"/></svg><span class="lbl" style="left:119.2px">[123] Jurygruppen GDA</span></div>
<div class="node" style="top:420.5px"><svg class="tic" style="left:97px" width="16" height="16" viewBox="0 0 16 16"><path fill="#858585" d="M0 2.500h4.500v2H6v9H0z"/><path fill="#d9c63e" d="M3.400 8V3.200a2.100 2.100 0 0 1 4.200 0V8zM7.400 8V3.800a2.100 2.100 0 0 1 4.200 0V8z"/><path fill="#f1ee7a" d="M4.300 8V4.500a1 1 0 0 1 1.600-.8L4.900 8zM8.400 8V5a1 1 0 0 1 1.500-.8L8.900 8z" opacity=".8"/><path fill="#a8962a" d="M6.300 8V3.800c.5.200.8.700.8 1.200V8zM10.300 8V4.300c.5.200.8.700.8 1.200V8z" opacity=".5"/><path fill="#a3a3a3" d="M0 13.500 3 7h13l-3 6.500z"/></svg><span class="lbl" style="left:119.2px">[78] Jurymitglieder</span></div>
<div class="node" style="top:446.5px"><span class="chev" style="left:43.3px"><span style="display:block;background:#e0e0e0"><svg class="ic" width="12" height="12" viewBox="0 0 16 16" fill="currentColor" stroke="currentColor" stroke-width=".5"><path d="M11.200 8 5.800 13.400l-.8-.8L9.600 8 5 3.400l.8-.8z"/></svg></span></span><svg class="tic" style="left:57px" width="16" height="16" viewBox="0 0 16 16"><path fill="#a1a1a1" d="M0 4h16v10H0z"/><path fill="#828282" d="M0 2h7v4.500H0z"/></svg><span class="lbl" style="left:79.2px">[2] Storagefolder</span></div>
<div class="anno" style="left:0;top:419.500px;width:299px;height:26px;border-radius:13px"></div>
<div class="annonum" style="left:259.500px;top:421px;font-size:21px;line-height:26px;font-family:DejaVu Sans,Liberation Sans,sans-serif">2</div>
</div>
<div id="doc" class="abs">
<div class="abs" style="right:24px;top:9px;line-height:16px;white-space:nowrap;color:#111">Path: /Projekte/Jurytool (rff)/Storagefolder/ <span style="display:inline-block;width:16px;height:16px;vertical-align:-3px;margin:0 4.300px 0 1.300px"><svg width="16" height="16" viewBox="0 0 16 16"><path fill="#858585" d="M0 2.500h4.500v2H6v9H0z"/><path fill="#d9c63e" d="M3.400 8V3.200a2.100 2.100 0 0 1 4.200 0V8zM7.400 8V3.800a2.100 2.100 0 0 1 4.200 0V8z"/><path fill="#f1ee7a" d="M4.300 8V4.500a1 1 0 0 1 1.600-.8L4.900 8zM8.400 8V5a1 1 0 0 1 1.500-.8L8.900 8z" opacity=".8"/><path fill="#a8962a" d="M6.300 8V3.800c.5.200.8.700.8 1.200V8zM10.300 8V4.300c.5.200.8.700.8 1.200V8z" opacity=".5"/><path fill="#a3a3a3" d="M0 13.500 3 7h13l-3 6.500z"/></svg></span><b>Jurymitglieder [78]</b></div>
<div class="btn" style="left:24px;top:35px;width:124px"><span style="left:10px;top:5px;"><svg class="ic" width="14" height="14" viewBox="0 0 16 16" fill="currentColor" ><path d="M14 6.700H9.300V2H6.700v4.700H2v2.600h4.700V14h2.600V9.300H14z"/></svg></span><span style="left:28px">Create new record</span></div>
<div class="btn" style="left:156px;top:35px;width:132px"><span style="left:8px;top:4px"><svg class="ic" width="16" height="16" viewBox="0 0 16 16" fill="currentColor" ><g fill="none" stroke="currentColor" stroke-width="1.500"><path d="M6.300 14.500H2.750V1.750h7l3.500 3.500v1.800"/><path d="M9.750 1.750v3.500h3.500"/></g><path d="M6.500 16.300l1-3.600 2.600 2.600z"/><path d="M8.300 11.900l4.600-4.600 2.600 2.600-4.600 4.600z"/><path d="M13.600 6.600l.6-.6 2.600 2.600-.6.600z"/></svg></span><span style="left:28.500px">Edit page properties</span></div>
<div class="btn" style="left:559px;top:35px;width:67px"><span style="left:8px;top:4px"><svg class="ic" width="16" height="16" viewBox="0 0 16 16" fill="currentColor" ><path d="M11 1H6L4 8h3l-1.500 7L12 6H8.500z"/></svg></span><span style="left:32px;top:-1px;width:1px;height:26px;background:#c4c4c4"></span><span style="left:41px;top:4px"><svg class="ic" width="16" height="16" viewBox="0 0 16 16" fill="currentColor" ><path d="M8 1.800A6.200 6.200 0 0 0 1.800 8H0l2.900 3.600L5.800 8H3.600a4.400 4.400 0 0 1 7.500-3.100l1.300-1.300A6.200 6.200 0 0 0 8 1.800zM13.100 4.400 10.200 8h2.200a4.400 4.400 0 0 1-7.500 3.100l-1.300 1.300A6.200 6.200 0 0 0 14.200 8H16z"/></svg></span></div>
<div class="btn" style="left:634px;top:35px;width:34px"><span style="left:8px;top:4px"><svg class="ic" width="16" height="16" viewBox="0 0 16 16" fill="currentColor" ><path d="M2 2v12h8.500L14 10.500V2H2zm1 1h10v7h-3v3H3V3z"/></svg></span></div>
<div class="btn" style="left:676px;top:35px;width:53px"><span style="left:8px">View</span><span style="left:37.500px;top:11px;border:3px solid transparent;border-top:3.300px solid #111;border-bottom:0;width:0;height:0"></span></div>
<div class="btn" style="left:743px;top:35px;width:46px"><span style="left:8px;top:4px"><svg class="ic" width="16" height="16" viewBox="0 0 16 16" fill="currentColor" ><path d="M12 10a2 2 0 0 0-1.500.68L5.940 8.400a2 2 0 0 0 0-.8l4.560-2.280A2 2 0 1 0 10 4a2 2 0 0 0 .06.4L5.500 6.680a2 2 0 1 0 0 2.640l4.560 2.280A2 2 0 1 0 12 10zm0-7a1 1 0 1 1-1 1 1 1 0 0 1 1-1zM4 9a1 1 0 1 1 1-1 1 1 0 0 1-1 1zm8 4a1 1 0 1 1 1-1 1 1 0 0 1-1 1z"/></svg></span><span style="left:31px;top:11px;border:3px solid transparent;border-top:3.300px solid #111;border-bottom:0;width:0;height:0"></span></div>
</div>
<div id="main" class="abs">
<h1 style="left:24px;top:21px;font-size:23.500px;line-height:36px">Jurymitglieder</h1>
<div class="abs" style="left:768px;top:31px;color:#b0b0b0"><svg class="ic" width="15" height="15" viewBox="0 0 16 16" fill="currentColor" ><path d="m9.293 3.293-8 8A.997.997 0 0 0 1 12v3h3c.265 0 .52-.105.707-.293l8-8-3.414-3.414zM8.999 5l.5.5-5 5-.5-.5 5-5zM4 14H3v-1H2v-1l1-1 2 2-1 1zM13.707 5.707l1.354-1.354a.5.5 0 0 0 0-.707L12.354.939a.5.5 0 0 0-.707 0l-1.354 1.354 3.414 3.414z"/></svg></div>
<div class="abs" style="left:24px;top:63px;width:245px;height:32px;border:1px solid #bbb;border-radius:2px;background:#fff;line-height:30px;padding-left:12px;color:#333">Create a new translation of this page<span class="abs" style="left:214px;top:7px;color:#222"><svg class="ic" width="16" height="16" viewBox="0 0 16 16" fill="currentColor" ><path d="M8 11.200 2.600 5.800l.8-.8L8 9.600 12.600 5l.8.8z"/></svg></span></div>
<div class="abs" style="left:23px;top:111px;width:586px;height:32px;border:1px solid #bbb;border-radius:2px 0 0 2px;background:#fff;line-height:30px;padding-left:12px;color:#b8b8b8">Enter search term</div>
<div class="abs" style="left:608px;top:111px;width:140px;height:32px;border:1px solid #bbb;background:#fff;line-height:30px;padding-left:12px;color:#333">This page<span class="abs" style="left:110px;top:7px;color:#222"><svg class="ic" width="16" height="16" viewBox="0 0 16 16" fill="currentColor" ><path d="M8 11.200 2.600 5.800l.8-.8L8 9.600 12.600 5l.8.8z"/></svg></span></div>
<div class="abs" style="left:747px;top:111px;width:42px;height:32px;border:1px solid #c4c4c4;border-radius:0 2px 2px 0;background:#ededed"><span class="abs" style="left:12px;top:7px;color:#111"><svg class="ic" width="16" height="16" viewBox="0 0 16 16" fill="currentColor" ><path d="M14.700 13.300l-3.200-3.200A5.700 5.700 0 0 0 12.700 7a5.700 5.700 0 1 0-5.700 5.700 5.700 5.700 0 0 0 3.100-1l3.200 3.200a1 1 0 0 0 1.400-1.400zM3.200 7a3.800 3.800 0 1 1 3.800 3.800A3.800 3.800 0 0 1 3.200 7z"/></svg></span></div>
<div class="abs" style="left:24px;top:159px;width:765px;height:470px;border:1px solid #d0d0d0;border-radius:3px;background:#fff;overflow:hidden">
<div class="abs" style="left:0;top:0;width:764px;height:50px;background:#f5f5f5"></div>
<div class="abs" style="left:16px;top:17px;font-weight:bold;line-height:16px;color:#222;white-space:nowrap">Website User (51)<span class="abs" style="left:108px;top:2.500px;color:#333"><svg class="ic" width="11" height="11" viewBox="0 0 16 16" fill="currentColor" stroke="currentColor" stroke-width=".7"><path d="M11.200 8 5.800 13.400l-.8-.8L9.600 8 5 3.400l.8-.8z"/></svg></span></div>
<div class="btn" style="left:419px;top:12px;width:92px"><span style="left:10px;top:5px;"><svg class="ic" width="14" height="14" viewBox="0 0 16 16" fill="currentColor" ><path d="M14 6.700H9.300V2H6.700v4.700H2v2.600h4.700V14h2.600V9.300H14z"/></svg></span><span style="left:29px">New record</span></div>
<div class="btn" style="left:515px;top:12px;width:84px"><span style="left:9px;top:4px"><svg class="ic" width="16" height="16" viewBox="0 0 16 16" fill="currentColor" ><path d="M9.200 1H6.800v5.500H4L8 10.500l4-4H9.200z"/><path d="M1.500 10.500v4.500h13v-4.500h-3.300l-1.500 1.500H6.300l-1.500-1.500zm1.100 1.100h1.700l1.500 1.500h4.400l1.500-1.500h1.700v2.300H2.600z" fill-rule="evenodd"/><path d="M11.300 12.600h1.300v.800h-1.300z"/></svg></span><span style="left:28px">Download</span></div>
<div class="btn" style="left:603px;top:12px;width:106px"><span style="left:9px;top:4px"><svg class="ic" width="16" height="16" viewBox="0 0 16 16" fill="currentColor" ><path d="M1 2v12h14V2H1zm13 11H2V3h12v10z"/><path d="M3 4h3v2H3zM3 7h3v2H3zM3 10h3v2H3zM7 4h6v2H7zM7 7h6v2H7zM7 10h6v2H7z" opacity=".0"/><path d="M4 5h2v2H4zM4 9h2v2H4zM7 5h5v2H7zM7 9h5v2H7z"/></svg></span><span style="left:28px">Show columns</span></div>
<div class="btn" style="left:713px;top:12px;width:34px"><span style="left:10px;top:6px"><svg class="ic" width="12" height="12" viewBox="0 0 16 16" fill="currentColor" stroke="currentColor" stroke-width=".7"><path d="M8 4.800 13.400 10.200l-.8.8L8 6.400 3.400 11l-.8-.8z"/></svg></span></div>
<div class="abs" style="left:0;top:50px;width:764px;height:36px;border-top:1px solid #d0d0d0;background:#fff">
<div class="abs" style="left:17px;top:10px;width:14px;height:14px;border:1.500px dotted #222;border-radius:2px"></div>
<span class="abs" style="left:38px;top:15px;border:3px solid transparent;border-top:3.300px solid #111;border-bottom:0;width:0;height:0"></span>
<div class="abs" style="left:66px;top:0;line-height:34px;font-weight:bold;color:#222">Username<span class="abs" style="left:60.500px;top:8.500px;color:#555"><svg width="16" height="17.500" viewBox="0 0 16 16" preserveAspectRatio="none" fill="currentColor"><path d="M8 1.500 5.600 4.400l.5.400L7.600 3v10l-1.500-1.800-.5.400L8 14.500l2.400-2.900-.5-.400L8.400 13V3l1.500 1.800.5-.400z"/></svg></span></div>
<div class="abs" style="left:373px;top:0;line-height:34px;font-weight:bold;color:#222">Groups<span class="abs" style="left:44.500px;top:8.500px;color:#555"><svg width="16" height="17.500" viewBox="0 0 16 16" preserveAspectRatio="none" fill="currentColor"><path d="M8 1.500 5.600 4.400l.5.400L7.600 3v10l-1.500-1.800-.5.400L8 14.500l2.400-2.900-.5-.400L8.400 13V3l1.500 1.800.5-.400z"/></svg></span></div>
</div>
<div class="trow" style="left:0;width:764px;top:85px;background:#f9f9f9">
<span class="cb"></span><span class="usr"><svg width="16" height="16" viewBox="0 0 16 16"><path fill="#5f9a3a" d="M0 16c.2-2.300 1.500-3.800 4.500-4.600L8 12.500l3.500-1.100c3 .8 4.300 2.300 4.500 4.600z"/><path fill="#e9b63f" d="M6.400 9h3.200v2.200L8 12.600l-1.600-1.400z"/><ellipse cx="8" cy="5.300" rx="3.800" ry="5.200" fill="#f2c34c"/></svg></span><span class="un">alain_gilles</span>
<div class="rowbtn" style="left:229px;width:88px"><span class="seg" style="left:0"><svg class="ic" width="16" height="16" viewBox="0 0 16 16" fill="#111" ><path d="m9.293 3.293-8 8A.997.997 0 0 0 1 12v3h3c.265 0 .52-.105.707-.293l8-8-3.414-3.414zM8.999 5l.5.5-5 5-.5-.5 5-5zM4 14H3v-1H2v-1l1-1 2 2-1 1zM13.707 5.707l1.354-1.354a.5.5 0 0 0 0-.707L12.354.939a.5.5 0 0 0-.707 0l-1.354 1.354 3.414 3.414z"/></svg></span><span class="seg" style="left:28px;border-left:1px solid #c2c2c2"><svg class="ic" width="16" height="16" viewBox="0 0 16 16" fill="#111" ><path d="M11 3H5a5 5 0 0 0 0 10h6a5 5 0 0 0 0-10zm-.2 8.100a3.100 3.100 0 1 1 0-6.200 3.100 3.100 0 0 1 0 6.200z"/></svg></span><span class="seg" style="left:57px;border-left:1px solid #c2c2c2"><svg class="ic" width="16" height="16" viewBox="0 0 16 16" fill="#111" ><path d="M7 5H6v8h1zM10 5H9v8h1z"/><path d="M13 3h-2v-.75C11 1.560 10.440 1 9.750 1h-3.500C5.560 1 5 1.560 5 2.250V3H3v10.750c0 .690.560 1.250 1.250 1.250h7.500c.690 0 1.250-.560 1.250-1.250V3zm-7-.75a.25.25 0 0 1 .25-.25h3.500a.25.25 0 0 1 .25.25V3H6v-.75zm6 11.500a.25.25 0 0 1-.25.25h-7.500a.25.25 0 0 1-.25-.25V4h8v9.750z"/><path d="M13.500 4h-11a.5.5 0 0 1 0-1h11a.5.5 0 0 1 0 1z"/></svg></span></div>
<div class="rowbtn" style="left:327px;width:30px"><span class="seg"><svg class="ic" width="16" height="16" viewBox="0 0 16 16" fill="#111" ><path d="M7 2.400h2v2H7zM7 7h2v2H7zM7 11.600h2v2H7z"/></svg></span></div>
<span class="gr">GDA - Excellent Product Design - Jury 1.1</span></div>
<div class="trow" style="left:0;width:764px;top:132px;background:#fff">
<span class="cb"></span><span class="usr"><svg width="16" height="16" viewBox="0 0 16 16"><path fill="#5f9a3a" d="M0 16c.2-2.300 1.500-3.800 4.500-4.600L8 12.500l3.500-1.100c3 .8 4.300 2.300 4.500 4.600z"/><path fill="#e9b63f" d="M6.400 9h3.200v2.200L8 12.600l-1.600-1.400z"/><ellipse cx="8" cy="5.300" rx="3.800" ry="5.200" fill="#f2c34c"/></svg></span><span class="un">alexander_fehre</span>
<div class="rowbtn" style="left:229px;width:88px"><span class="seg" style="left:0"><svg class="ic" width="16" height="16" viewBox="0 0 16 16" fill="#111" ><path d="m9.293 3.293-8 8A.997.997 0 0 0 1 12v3h3c.265 0 .52-.105.707-.293l8-8-3.414-3.414zM8.999 5l.5.5-5 5-.5-.5 5-5zM4 14H3v-1H2v-1l1-1 2 2-1 1zM13.707 5.707l1.354-1.354a.5.5 0 0 0 0-.707L12.354.939a.5.5 0 0 0-.707 0l-1.354 1.354 3.414 3.414z"/></svg></span><span class="seg" style="left:28px;border-left:1px solid #c2c2c2"><svg class="ic" width="16" height="16" viewBox="0 0 16 16" fill="#111" ><path d="M11 3H5a5 5 0 0 0 0 10h6a5 5 0 0 0 0-10zm-.2 8.100a3.100 3.100 0 1 1 0-6.200 3.100 3.100 0 0 1 0 6.200z"/></svg></span><span class="seg" style="left:57px;border-left:1px solid #c2c2c2"><svg class="ic" width="16" height="16" viewBox="0 0 16 16" fill="#111" ><path d="M7 5H6v8h1zM10 5H9v8h1z"/><path d="M13 3h-2v-.75C11 1.560 10.440 1 9.750 1h-3.500C5.560 1 5 1.560 5 2.250V3H3v10.750c0 .690.560 1.250 1.250 1.250h7.500c.690 0 1.250-.560 1.250-1.250V3zm-7-.75a.25.25 0 0 1 .25-.25h3.500a.25.25 0 0 1 .25.25V3H6v-.75zm6 11.500a.25.25 0 0 1-.25.25h-7.500a.25.25 0 0 1-.25-.25V4h8v9.750z"/><path d="M13.500 4h-11a.5.5 0 0 1 0-1h11a.5.5 0 0 1 0 1z"/></svg></span></div>
<div class="rowbtn" style="left:327px;width:30px"><span class="seg"><svg class="ic" width="16" height="16" viewBox="0 0 16 16" fill="#111" ><path d="M7 2.400h2v2H7zM7 7h2v2H7zM7 11.600h2v2H7z"/></svg></span></div>
<span class="gr">GDA - Excellent Architecture - Jury 3.2</span></div>
<div class="trow" style="left:0;width:764px;top:179px;background:#f9f9f9">
<span class="cb"></span><span class="usr"><svg width="16" height="16" viewBox="0 0 16 16"><path fill="#5f9a3a" d="M0 16c.2-2.300 1.500-3.800 4.500-4.600L8 12.500l3.500-1.100c3 .8 4.300 2.300 4.500 4.600z"/><path fill="#e9b63f" d="M6.400 9h3.200v2.200L8 12.600l-1.600-1.400z"/><ellipse cx="8" cy="5.300" rx="3.800" ry="5.200" fill="#f2c34c"/></svg></span><span class="un">andreas_diefenbach</span>
<div class="rowbtn" style="left:229px;width:88px"><span class="seg" style="left:0"><svg class="ic" width="16" height="16" viewBox="0 0 16 16" fill="#111" ><path d="m9.293 3.293-8 8A.997.997 0 0 0 1 12v3h3c.265 0 .52-.105.707-.293l8-8-3.414-3.414zM8.999 5l.5.5-5 5-.5-.5 5-5zM4 14H3v-1H2v-1l1-1 2 2-1 1zM13.707 5.707l1.354-1.354a.5.5 0 0 0 0-.707L12.354.939a.5.5 0 0 0-.707 0l-1.354 1.354 3.414 3.414z"/></svg></span><span class="seg" style="left:28px;border-left:1px solid #c2c2c2"><svg class="ic" width="16" height="16" viewBox="0 0 16 16" fill="#111" ><path d="M11 3H5a5 5 0 0 0 0 10h6a5 5 0 0 0 0-10zm-.2 8.100a3.100 3.100 0 1 1 0-6.200 3.100 3.100 0 0 1 0 6.200z"/></svg></span><span class="seg" style="left:57px;border-left:1px solid #c2c2c2"><svg class="ic" width="16" height="16" viewBox="0 0 16 16" fill="#111" ><path d="M7 5H6v8h1zM10 5H9v8h1z"/><path d="M13 3h-2v-.75C11 1.560 10.440 1 9.750 1h-3.500C5.560 1 5 1.560 5 2.250V3H3v10.750c0 .690.560 1.250 1.250 1.250h7.500c.690 0 1.250-.560 1.250-1.250V3zm-7-.75a.25.25 0 0 1 .25-.25h3.500a.25.25 0 0 1 .25.25V3H6v-.75zm6 11.500a.25.25 0 0 1-.25.25h-7.500a.25.25 0 0 1-.25-.25V4h8v9.750z"/><path d="M13.500 4h-11a.5.5 0 0 1 0-1h11a.5.5 0 0 1 0 1z"/></svg></span></div>
<div class="rowbtn" style="left:327px;width:30px"><span class="seg"><svg class="ic" width="16" height="16" viewBox="0 0 16 16" fill="#111" ><path d="M7 2.400h2v2H7zM7 7h2v2H7zM7 11.600h2v2H7z"/></svg></span></div>
<span class="gr">GDA - Excellent Product Design - Jury 1.2</span></div>
<div class="trow" style="left:0;width:764px;top:226px;background:#fff">
<span class="cb"></span><span class="usr"><svg width="16" height="16" viewBox="0 0 16 16"><path fill="#5f9a3a" d="M0 16c.2-2.300 1.500-3.800 4.500-4.600L8 12.500l3.500-1.100c3 .8 4.300 2.300 4.500 4.600z"/><path fill="#e9b63f" d="M6.400 9h3.200v2.200L8 12.600l-1.600-1.400z"/><ellipse cx="8" cy="5.300" rx="3.800" ry="5.200" fill="#f2c34c"/></svg></span><span class="un">ansgar_eidens</span>
<div class="rowbtn" style="left:229px;width:88px"><span class="seg" style="left:0"><svg class="ic" width="16" height="16" viewBox="0 0 16 16" fill="#111" ><path d="m9.293 3.293-8 8A.997.997 0 0 0 1 12v3h3c.265 0 .52-.105.707-.293l8-8-3.414-3.414zM8.999 5l.5.5-5 5-.5-.5 5-5zM4 14H3v-1H2v-1l1-1 2 2-1 1zM13.707 5.707l1.354-1.354a.5.5 0 0 0 0-.707L12.354.939a.5.5 0 0 0-.707 0l-1.354 1.354 3.414 3.414z"/></svg></span><span class="seg" style="left:28px;border-left:1px solid #c2c2c2"><svg class="ic" width="16" height="16" viewBox="0 0 16 16" fill="#111" ><path d="M11 3H5a5 5 0 0 0 0 10h6a5 5 0 0 0 0-10zm-.2 8.100a3.100 3.100 0 1 1 0-6.200 3.100 3.100 0 0 1 0 6.200z"/></svg></span><span class="seg" style="left:57px;border-left:1px solid #c2c2c2"><svg class="ic" width="16" height="16" viewBox="0 0 16 16" fill="#111" ><path d="M7 5H6v8h1zM10 5H9v8h1z"/><path d="M13 3h-2v-.75C11 1.560 10.440 1 9.750 1h-3.500C5.560 1 5 1.560 5 2.250V3H3v10.750c0 .690.560 1.250 1.250 1.250h7.500c.690 0 1.250-.560 1.250-1.250V3zm-7-.75a.25.25 0 0 1 .25-.25h3.500a.25.25 0 0 1 .25.25V3H6v-.75zm6 11.500a.25.25 0 0 1-.25.25h-7.500a.25.25 0 0 1-.25-.25V4h8v9.750z"/><path d="M13.500 4h-11a.5.5 0 0 1 0-1h11a.5.5 0 0 1 0 1z"/></svg></span></div>
<div class="rowbtn" style="left:327px;width:30px"><span class="seg"><svg class="ic" width="16" height="16" viewBox="0 0 16 16" fill="#111" ><path d="M7 2.400h2v2H7zM7 7h2v2H7zM7 11.600h2v2H7z"/></svg></span></div>
<span class="gr">GDA - Excellent Communications Design - Jury 2.1</span></div>
<div class="trow" style="left:0;width:764px;top:273px;background:#f9f9f9">
<span class="cb"></span><span class="usr"><svg width="16" height="16" viewBox="0 0 16 16"><path fill="#5f9a3a" d="M0 16c.2-2.300 1.500-3.800 4.500-4.600L8 12.500l3.500-1.100c3 .8 4.300 2.300 4.500 4.600z"/><path fill="#e9b63f" d="M6.400 9h3.200v2.200L8 12.600l-1.600-1.400z"/><ellipse cx="8" cy="5.300" rx="3.800" ry="5.200" fill="#f2c34c"/></svg></span><span class="un">bjoern_sorge</span>
<div class="rowbtn" style="left:229px;width:88px"><span class="seg" style="left:0"><svg class="ic" width="16" height="16" viewBox="0 0 16 16" fill="#111" ><path d="m9.293 3.293-8 8A.997.997 0 0 0 1 12v3h3c.265 0 .52-.105.707-.293l8-8-3.414-3.414zM8.999 5l.5.5-5 5-.5-.5 5-5zM4 14H3v-1H2v-1l1-1 2 2-1 1zM13.707 5.707l1.354-1.354a.5.5 0 0 0 0-.707L12.354.939a.5.5 0 0 0-.707 0l-1.354 1.354 3.414 3.414z"/></svg></span><span class="seg" style="left:28px;border-left:1px solid #c2c2c2"><svg class="ic" width="16" height="16" viewBox="0 0 16 16" fill="#111" ><path d="M11 3H5a5 5 0 0 0 0 10h6a5 5 0 0 0 0-10zm-.2 8.100a3.100 3.100 0 1 1 0-6.200 3.100 3.100 0 0 1 0 6.200z"/></svg></span><span class="seg" style="left:57px;border-left:1px solid #c2c2c2"><svg class="ic" width="16" height="16" viewBox="0 0 16 16" fill="#111" ><path d="M7 5H6v8h1zM10 5H9v8h1z"/><path d="M13 3h-2v-.75C11 1.560 10.440 1 9.750 1h-3.500C5.560 1 5 1.560 5 2.250V3H3v10.750c0 .690.560 1.250 1.250 1.250h7.500c.690 0 1.250-.560 1.250-1.250V3zm-7-.75a.25.25 0 0 1 .25-.25h3.500a.25.25 0 0 1 .25.25V3H6v-.75zm6 11.500a.25.25 0 0 1-.25.25h-7.500a.25.25 0 0 1-.25-.25V4h8v9.750z"/><path d="M13.500 4h-11a.5.5 0 0 1 0-1h11a.5.5 0 0 1 0 1z"/></svg></span></div>
<div class="rowbtn" style="left:327px;width:30px"><span class="seg"><svg class="ic" width="16" height="16" viewBox="0 0 16 16" fill="#111" ><path d="M7 2.400h2v2H7zM7 7h2v2H7zM7 11.600h2v2H7z"/></svg></span></div>
<span class="gr">GDA - Excellent Communications Design - Jury 2.3</span></div>
<div class="trow" style="left:0;width:764px;top:320px;background:#fff">
<span class="cb"></span><span class="usr"><svg width="16" height="16" viewBox="0 0 16 16"><path fill="#5f9a3a" d="M0 16c.2-2.300 1.500-3.800 4.500-4.600L8 12.500l3.500-1.100c3 .8 4.300 2.300 4.500 4.600z"/><path fill="#e9b63f" d="M6.400 9h3.200v2.200L8 12.600l-1.600-1.400z"/><ellipse cx="8" cy="5.300" rx="3.800" ry="5.200" fill="#f2c34c"/></svg></span><span class="un">caterina_bellavite</span>
<div class="rowbtn" style="left:229px;width:88px"><span class="seg" style="left:0"><svg class="ic" width="16" height="16" viewBox="0 0 16 16" fill="#111" ><path d="m9.293 3.293-8 8A.997.997 0 0 0 1 12v3h3c.265 0 .52-.105.707-.293l8-8-3.414-3.414zM8.999 5l.5.5-5 5-.5-.5 5-5zM4 14H3v-1H2v-1l1-1 2 2-1 1zM13.707 5.707l1.354-1.354a.5.5 0 0 0 0-.707L12.354.939a.5.5 0 0 0-.707 0l-1.354 1.354 3.414 3.414z"/></svg></span><span class="seg" style="left:28px;border-left:1px solid #c2c2c2"><svg class="ic" width="16" height="16" viewBox="0 0 16 16" fill="#111" ><path d="M11 3H5a5 5 0 0 0 0 10h6a5 5 0 0 0 0-10zm-.2 8.100a3.100 3.100 0 1 1 0-6.200 3.100 3.100 0 0 1 0 6.200z"/></svg></span><span class="seg" style="left:57px;border-left:1px solid #c2c2c2"><svg class="ic" width="16" height="16" viewBox="0 0 16 16" fill="#111" ><path d="M7 5H6v8h1zM10 5H9v8h1z"/><path d="M13 3h-2v-.75C11 1.560 10.440 1 9.750 1h-3.500C5.560 1 5 1.560 5 2.250V3H3v10.750c0 .690.560 1.250 1.250 1.250h7.500c.690 0 1.250-.560 1.250-1.250V3zm-7-.75a.25.25 0 0 1 .25-.25h3.500a.25.25 0 0 1 .25.25V3H6v-.75zm6 11.500a.25.25 0 0 1-.25.25h-7.500a.25.25 0 0 1-.25-.25V4h8v9.750z"/><path d="M13.500 4h-11a.5.5 0 0 1 0-1h11a.5.5 0 0 1 0 1z"/></svg></span></div>
<div class="rowbtn" style="left:327px;width:30px"><span class="seg"><svg class="ic" width="16" height="16" viewBox="0 0 16 16" fill="#111" ><path d="M7 2.400h2v2H7zM7 7h2v2H7zM7 11.600h2v2H7z"/></svg></span></div>
<span class="gr">GDA - Excellent Communications Design - Jury 2.4, GDA - Newcomer - Jury 4.1</span></div>
<div class="trow" style="left:0;width:764px;top:367px;background:#f9f9f9">
<span class="cb"></span><span class="usr"><svg width="16" height="16" viewBox="0 0 16 16"><path fill="#5f9a3a" d="M0 16c.2-2.300 1.500-3.800 4.500-4.600L8 12.500l3.500-1.100c3 .8 4.300 2.300 4.500 4.600z"/><path fill="#e9b63f" d="M6.400 9h3.200v2.200L8 12.600l-1.600-1.400z"/><ellipse cx="8" cy="5.300" rx="3.800" ry="5.200" fill="#f2c34c"/></svg></span><span class="un">christian_zanzotti</span>
<div class="rowbtn" style="left:229px;width:88px"><span class="seg" style="left:0"><svg class="ic" width="16" height="16" viewBox="0 0 16 16" fill="#111" ><path d="m9.293 3.293-8 8A.997.997 0 0 0 1 12v3h3c.265 0 .52-.105.707-.293l8-8-3.414-3.414zM8.999 5l.5.5-5 5-.5-.5 5-5zM4 14H3v-1H2v-1l1-1 2 2-1 1zM13.707 5.707l1.354-1.354a.5.5 0 0 0 0-.707L12.354.939a.5.5 0 0 0-.707 0l-1.354 1.354 3.414 3.414z"/></svg></span><span class="seg" style="left:28px;border-left:1px solid #c2c2c2"><svg class="ic" width="16" height="16" viewBox="0 0 16 16" fill="#111" ><path d="M11 3H5a5 5 0 0 0 0 10h6a5 5 0 0 0 0-10zm-.2 8.100a3.100 3.100 0 1 1 0-6.200 3.100 3.100 0 0 1 0 6.200z"/></svg></span><span class="seg" style="left:57px;border-left:1px solid #c2c2c2"><svg class="ic" width="16" height="16" viewBox="0 0 16 16" fill="#111" ><path d="M7 5H6v8h1zM10 5H9v8h1z"/><path d="M13 3h-2v-.75C11 1.560 10.440 1 9.750 1h-3.500C5.560 1 5 1.560 5 2.250V3H3v10.750c0 .690.560 1.250 1.250 1.250h7.500c.690 0 1.250-.560 1.250-1.250V3zm-7-.75a.25.25 0 0 1 .25-.25h3.500a.25.25 0 0 1 .25.25V3H6v-.75zm6 11.500a.25.25 0 0 1-.25.25h-7.500a.25.25 0 0 1-.25-.25V4h8v9.750z"/><path d="M13.500 4h-11a.5.5 0 0 1 0-1h11a.5.5 0 0 1 0 1z"/></svg></span></div>
<div class="rowbtn" style="left:327px;width:30px"><span class="seg"><svg class="ic" width="16" height="16" viewBox="0 0 16 16" fill="#111" ><path d="M7 2.400h2v2H7zM7 7h2v2H7zM7 11.600h2v2H7z"/></svg></span></div>
<span class="gr">GDA - Excellent Product Design - Jury 1.3</span></div>
<div class="trow" style="left:0;width:764px;top:414px;background:#fff">
<span class="cb"></span><span class="usr"><svg width="16" height="16" viewBox="0 0 16 16"><path fill="#5f9a3a" d="M0 16c.2-2.300 1.500-3.800 4.500-4.600L8 12.500l3.500-1.100c3 .8 4.300 2.300 4.500 4.600z"/><path fill="#e9b63f" d="M6.400 9h3.200v2.200L8 12.600l-1.600-1.400z"/><ellipse cx="8" cy="5.300" rx="3.800" ry="5.200" fill="#f2c34c"/></svg></span><span class="un">christine_matz</span>
<div class="rowbtn" style="left:229px;width:88px"><span class="seg" style="left:0"><svg class="ic" width="16" height="16" viewBox="0 0 16 16" fill="#111" ><path d="m9.293 3.293-8 8A.997.997 0 0 0 1 12v3h3c.265 0 .52-.105.707-.293l8-8-3.414-3.414zM8.999 5l.5.5-5 5-.5-.5 5-5zM4 14H3v-1H2v-1l1-1 2 2-1 1zM13.707 5.707l1.354-1.354a.5.5 0 0 0 0-.707L12.354.939a.5.5 0 0 0-.707 0l-1.354 1.354 3.414 3.414z"/></svg></span><span class="seg" style="left:28px;border-left:1px solid #c2c2c2"><svg class="ic" width="16" height="16" viewBox="0 0 16 16" fill="#111" ><path d="M11 3H5a5 5 0 0 0 0 10h6a5 5 0 0 0 0-10zm-.2 8.100a3.100 3.100 0 1 1 0-6.200 3.100 3.100 0 0 1 0 6.200z"/></svg></span><span class="seg" style="left:57px;border-left:1px solid #c2c2c2"><svg class="ic" width="16" height="16" viewBox="0 0 16 16" fill="#111" ><path d="M7 5H6v8h1zM10 5H9v8h1z"/><path d="M13 3h-2v-.75C11 1.560 10.440 1 9.750 1h-3.500C5.560 1 5 1.560 5 2.250V3H3v10.750c0 .690.560 1.250 1.250 1.250h7.500c.690 0 1.250-.560 1.250-1.250V3zm-7-.75a.25.25 0 0 1 .25-.25h3.500a.25.25 0 0 1 .25.25V3H6v-.75zm6 11.500a.25.25 0 0 1-.25.25h-7.500a.25.25 0 0 1-.25-.25V4h8v9.750z"/><path d="M13.500 4h-11a.5.5 0 0 1 0-1h11a.5.5 0 0 1 0 1z"/></svg></span></div>
<div class="rowbtn" style="left:327px;width:30px"><span class="seg"><svg class="ic" width="16" height="16" viewBox="0 0 16 16" fill="#111" ><path d="M7 2.400h2v2H7zM7 7h2v2H7zM7 11.600h2v2H7z"/></svg></span></div>
<span class="gr">GDA - Excellent Product Design - Jury 1.5</span></div>
</div>
</div>
</body></html>
